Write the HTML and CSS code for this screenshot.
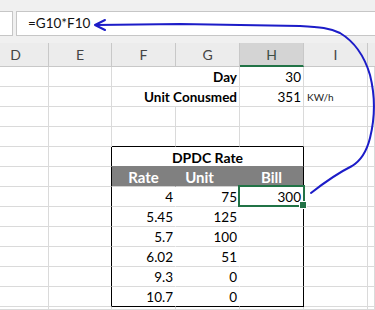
FILE: index.html
```html
<!DOCTYPE html>
<html>
<head>
<meta charset="utf-8">
<link rel="stylesheet" href="styles.css">
</head>
<body>
<div class="app">
  <div class="fbar">
    <div class="namebox"></div>
    <div class="formula">=G10*F10</div>
  </div>
  <div class="sheet">
    <div class="ch d">D</div><div class="ch">E</div><div class="ch">F</div><div class="ch">G</div><div class="ch sel">H</div><div class="ch">I</div><div class="ch last"></div>

    <div class="c"></div><div class="c"></div><div class="c span2 b">Day</div><div class="c">30</div><div class="c"></div><div class="c"></div>
    <div class="c"></div><div class="c"></div><div class="c span2 b">Unit Conusmed</div><div class="c">351</div><div class="c unit">KW/h</div><div class="c"></div>
    <div class="c"></div><div class="c"></div><div class="c"></div><div class="c"></div><div class="c"></div><div class="c"></div><div class="c"></div>
    <div class="c"></div><div class="c"></div><div class="c tt"></div><div class="c tt"></div><div class="c tt"></div><div class="c"></div><div class="c"></div>

    <div class="c"></div><div class="c tl"></div><div class="c title">DPDC Rate</div><div class="c"></div><div class="c"></div>
    <div class="c"></div><div class="c tl"></div><div class="c hd">Rate</div><div class="c hd unit-h">Unit</div><div class="c hd tr">Bill</div><div class="c"></div><div class="c"></div>
    <div class="c"></div><div class="c tl"></div><div class="c in">4</div><div class="c in">75</div><div class="c tr cur">300</div><div class="c"></div><div class="c"></div>
    <div class="c"></div><div class="c tl"></div><div class="c in">5.45</div><div class="c in">125</div><div class="c tr"></div><div class="c"></div><div class="c"></div>
    <div class="c"></div><div class="c tl"></div><div class="c in">5.7</div><div class="c in">100</div><div class="c tr"></div><div class="c"></div><div class="c"></div>
    <div class="c"></div><div class="c tl"></div><div class="c in">6.02</div><div class="c in">51</div><div class="c tr"></div><div class="c"></div><div class="c"></div>
    <div class="c"></div><div class="c tl"></div><div class="c in">9.3</div><div class="c in">0</div><div class="c tr"></div><div class="c"></div><div class="c"></div>
    <div class="c"></div><div class="c tl"></div><div class="c in tb">10.7</div><div class="c in tb">0</div><div class="c tr tb"></div><div class="c"></div><div class="c"></div>

    <div class="c"></div><div class="c"></div><div class="c"></div><div class="c"></div><div class="c"></div><div class="c"></div><div class="c"></div>
  </div>
  <svg class="arrow" width="375" height="310" viewBox="0 0 375 310">
    <path d="M311,193 C325,182 340,172 352,166 C362,160 367,150 370,138 C375,118 375,95 370,75 C365,58 355,42 340,33 C330,28 320,27 300,26 L180,24 L96,25" fill="none" stroke="#1c1cc8" stroke-width="2" stroke-linecap="round" stroke-linejoin="round"/>
    <path d="M105,20 L95,25 L105,30" fill="none" stroke="#1c1cc8" stroke-width="2" stroke-linecap="round" stroke-linejoin="round"/>
  </svg>
</div>
</body>
</html>
```

FILE: styles.css
```css
* {
  box-sizing: border-box;
  margin: 0;
  padding: 0;
}

body {
  width: 375px;
  height: 310px;
  overflow: hidden;
  background: #fff;
  font-family: Lato, "Liberation Sans", sans-serif;
  color: #000;
}

.app {
  position: relative;
  width: 375px;
  height: 310px;
  overflow: hidden;
}

.fbar {
  display: flex;
  gap: 3px;
  height: 43px;
  padding: 11px 0 7px;
  background: #f0f0f0;
}

.namebox {
  width: 13px;
  background: #fff;
  border: 1px solid #c6c6c6;
  border-left: none;
}

.formula {
  flex: 1;
  background: #fff;
  border: 1px solid #c6c6c6;
  border-right: none;
  padding-left: 11px;
  font-size: 13.5px;
  line-height: 23px;
  color: #111;
}

.sheet {
  display: grid;
  grid-template-columns: 49px 63px 64px 64px 64px 64px 1fr;
  grid-template-rows: 24px repeat(12, 20px) 1fr;
  height: 267px;
}

.ch {
  background: #ececec;
  border-right: 1px solid #c8c8c8;
  border-bottom: 1px solid #c8c8c8;
  color: #444;
  font-size: 14px;
  line-height: 23px;
  text-align: center;
}

.ch.d {
  padding-right: 17px;
}

.ch.sel {
  background: #d4d4d4;
  border-bottom: 2px solid #217346;
  color: #3f4f45;
}

.ch.last {
  border-right: none;
}

.c {
  border-right: 1px solid #dadada;
  border-bottom: 1px solid #dadada;
  font-size: 13.5px;
  line-height: 19px;
  padding: 1px 2px 0;
  text-align: right;
  white-space: nowrap;
}

.span2 {
  grid-column: span 2;
}

.b {
  font-weight: bold;
}

.unit {
  text-align: left;
  font-size: 10px;
  padding-left: 3px;
  color: #222;
}

.tt {
  border-bottom-color: #000;
}

.tl {
  border-right-color: #000;
}

.tr {
  border-right-color: #000;
}

.tb {
  border-bottom-color: #000;
}

.in {
  border-right-color: #fff;
}

.title {
  grid-column: span 3;
  font-weight: bold;
  font-size: 14px;
  text-align: center;
  border-right-color: #000;
  border-bottom-color: #808080;
}

.hd {
  background: #808080;
  color: #fff;
  font-weight: bold;
  font-size: 15px;
  text-align: center;
  border-right-color: #808080;
  border-bottom-color: #d0d0d0;
}

.hd.unit-h {
  padding-right: 18px;
}

.hd.tr {
  border-right-color: #000;
}

.cur {
  position: relative;
}

.cur::after {
  content: "";
  position: absolute;
  top: -2px;
  left: -2px;
  right: -2px;
  bottom: -1px;
  border: 2px solid #217346;
}

.cur::before {
  content: "";
  position: absolute;
  right: -4px;
  bottom: -3px;
  width: 6px;
  height: 6px;
  background: #217346;
  border: 1px solid #fff;
  z-index: 1;
}

.arrow {
  position: absolute;
  top: 0;
  left: 0;
  pointer-events: none;
}
```
